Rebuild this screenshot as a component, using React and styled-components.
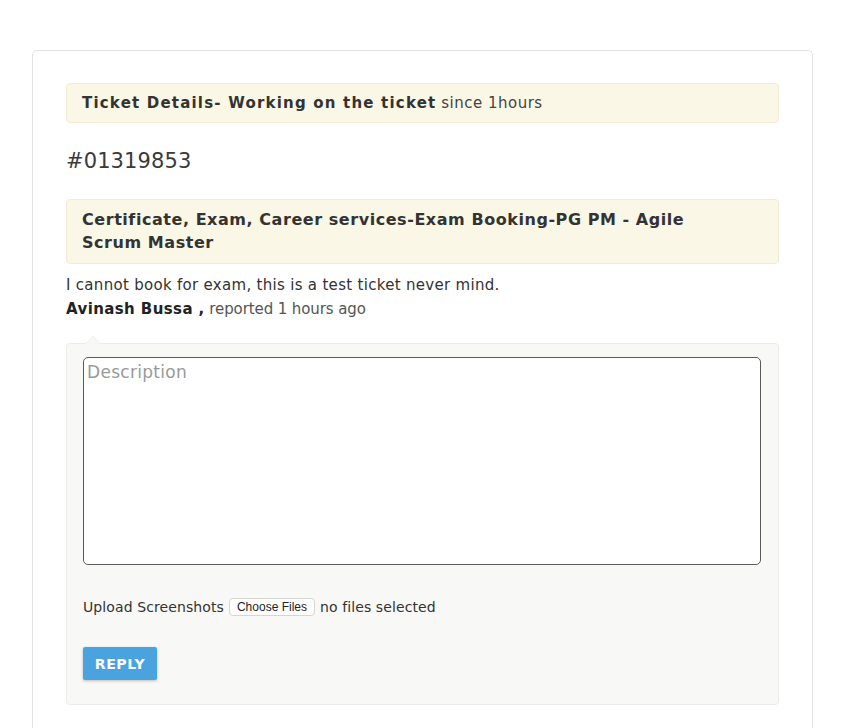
import React from 'react';
import styled, { createGlobalStyle } from 'styled-components';

const GlobalStyle = createGlobalStyle`
  html, body {
    margin: 0;
    padding: 0;
    background: #ffffff;
    font-family: "DejaVu Sans", "Liberation Sans", sans-serif;
    color: #333333;
  }
`;

const Page = styled.div`
  padding: 50px 31px 0 32px;
  height: 728px;
  box-sizing: border-box;
  overflow: hidden;
`;

const Card = styled.div`
  border: 1px solid #e2e2e2;
  border-radius: 5px;
  padding: 32px 33px 40px 33px;
  min-height: 720px;
  box-sizing: border-box;
`;

const Banner = styled.div`
  background: #faf7e6;
  border: 1px solid #f1ecd2;
  border-radius: 4px;
  padding: ${(p) => (p.tall ? '8px 60px 9px 15px' : '10px 15px 9px')};
  font-size: ${(p) => (p.tall ? '16px' : '15px')};
  line-height: ${(p) => (p.tall ? '23px' : '19px')};
  color: #333333;
`;

const Strong = styled.span`
  font-weight: 700;
  letter-spacing: ${(p) => p.spacing || '1.2px'};
  color: ${(p) => p.color || '#333333'};
`;

const Light = styled.span`
  font-weight: 400;
  letter-spacing: 0.5px;
  color: #444444;
`;

const TicketId = styled.h2`
  margin: 23px 0 23px;
  font-size: 21px;
  line-height: 30px;
  font-weight: 400;
  letter-spacing: 0.1px;
  color: #3a3a3a;
`;

const Message = styled.p`
  margin: 9px 0 0;
  font-size: 15px;
  line-height: 24px;
  letter-spacing: 0.3px;
  color: #333333;
`;

const Reporter = styled.p`
  margin: 0;
  font-size: 15px;
  line-height: 24px;
  letter-spacing: -0.1px;
  color: #555555;
`;

const ReplyBox = styled.div`
  position: relative;
  margin-top: 22px;
  background: #f8f8f6;
  border: 1px solid #ececea;
  border-radius: 4px;
  padding: 13px 17px 24px 16px;

  &::before {
    content: '';
    position: absolute;
    top: -8px;
    left: 18px;
    width: 0;
    height: 0;
    border-left: 8px solid transparent;
    border-right: 8px solid transparent;
    border-bottom: 8px solid #ececea;
  }
  &::after {
    content: '';
    position: absolute;
    top: -7px;
    left: 19px;
    width: 0;
    height: 0;
    border-left: 7px solid transparent;
    border-right: 7px solid transparent;
    border-bottom: 7px solid #f8f8f6;
  }
`;

const TextArea = styled.textarea`
  display: block;
  width: 100%;
  height: 208px;
  box-sizing: border-box;
  border: 1px solid #5a5a5a;
  border-radius: 5px;
  background: #ffffff;
  padding: 4px 3px;
  font-family: "DejaVu Sans", "Liberation Sans", sans-serif;
  font-size: 17px;
  letter-spacing: 0.3px;
  resize: none;
  outline: none;

  &::placeholder {
    color: #999999;
  }
`;

const UploadRow = styled.div`
  display: flex;
  align-items: center;
  gap: 5px;
  margin-top: 33px;
  font-size: 14px;
  letter-spacing: 0.1px;
  color: #333333;
`;

const FileButton = styled.span`
  display: inline-block;
  background: #ffffff;
  border: 1px solid #d6d6d6;
  border-radius: 4px;
  padding: 0 7px;
  font-family: "Liberation Sans", sans-serif;
  font-size: 12px;
  line-height: 16px;
  letter-spacing: 0;
  color: #222222;
`;

const ReplyButton = styled.button`
  display: block;
  margin-top: 31px;
  background: #4aa3df;
  color: #ffffff;
  border: none;
  border-radius: 2px;
  box-shadow: 0 1px 3px rgba(0, 0, 0, 0.25);
  width: 74px;
  height: 33px;
  font-family: "DejaVu Sans", "Liberation Sans", sans-serif;
  font-size: 14px;
  font-weight: 700;
  letter-spacing: 0.6px;
  cursor: pointer;
`;

export default function App() {
  return (
    <>
      <GlobalStyle />
      <Page>
        <Card>
          <Banner>
            <Strong>Ticket Details- Working on the ticket</Strong>{' '}
            <Light>since 1hours</Light>
          </Banner>
          <TicketId>#01319853</TicketId>
          <Banner tall>
            <Strong spacing="0.55px">
              Certificate, Exam, Career services-Exam Booking-PG PM - Agile Scrum Master
            </Strong>
          </Banner>
          <Message>I cannot book for exam, this is a test ticket never mind.</Message>
          <Reporter>
            <Strong spacing="0.4px" color="#222222">Avinash Bussa ,</Strong> reported 1 hours ago
          </Reporter>
          <ReplyBox>
            <TextArea placeholder="Description" />
            <UploadRow>
              <span>Upload Screenshots</span>
              <FileButton>Choose Files</FileButton>
              <span>no files selected</span>
            </UploadRow>
            <ReplyButton>REPLY</ReplyButton>
          </ReplyBox>
        </Card>
      </Page>
    </>
  );
}
